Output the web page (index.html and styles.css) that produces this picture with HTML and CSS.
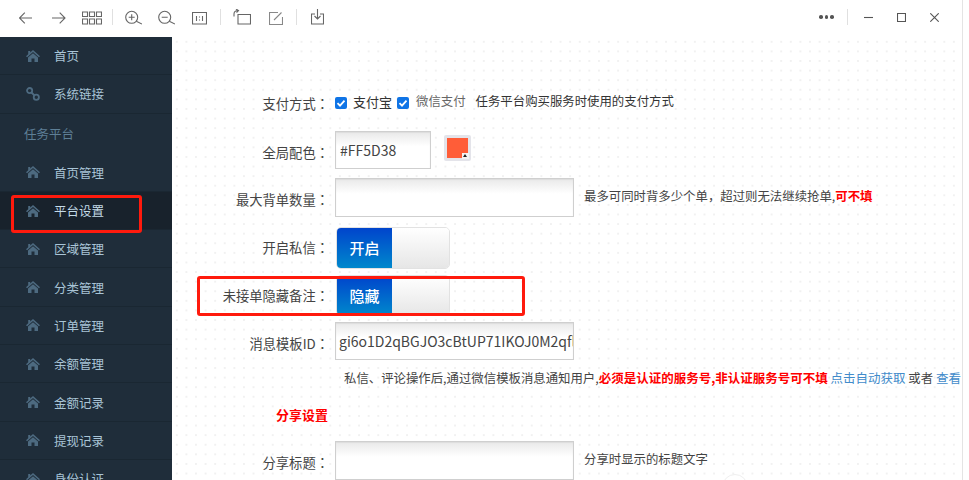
FILE: index.html
```html
<!DOCTYPE html>
<html lang="zh-CN">
<head>
    <meta charset="UTF-8">
    <title>平台设置</title>
    <link rel="stylesheet" href="styles.css">
</head>
<body>
    <svg class="icon-defs" width="0" height="0">
        <symbol id="home" viewBox="0 0 14 12">
            <path d="M7 0 L14 6.200 L12.900 7.200 L7 2 L1.100 7.200 L0 6.200 L2.200 4.300 V1 H4.200 V2.500 Z M7 3.200 L12 7.500 V12 H8.500 V8.500 H5.500 V12 H2 V7.500 Z"/>
        </symbol>
    </svg>

    <!-- Viewer toolbar -->
    <div class="toolbar">
        <div class="tools">
            <svg class="tool t-back" viewBox="0 0 13 16"><path d="M13 9H.5M5.800 3.700L.5 9l5.300 5.300"/></svg>
            <svg class="tool t-forward" viewBox="0 0 14 16"><path d="M0 9h13M7.700 3.700L13 9l-5.300 5.300"/></svg>
            <svg class="tool t-grid" viewBox="0 0 20 16"><path d="M.5 3h5v4.500h-5zM7.500 3h5v4.500h-5zM14.500 3h5v4.500h-5zM.5 10h5v5h-5zM7.500 10h5v5h-5zM14.500 10h5v5h-5z"/></svg>
            <span class="sep"></span>
            <svg class="tool t-zoom" viewBox="0 0 17 16"><circle cx="6.700" cy="8.300" r="6"/><path d="M11.300 12.300L17 15M3.700 8.300h6M6.700 5.300v6"/></svg>
            <svg class="tool t-zoom t-out" viewBox="0 0 17 16"><circle cx="6.700" cy="8.300" r="6"/><path d="M11.300 12.300L17 15M3.700 8.300h6"/></svg>
            <svg class="tool t-actual" viewBox="0 0 15 16"><path d="M.5 3.500h14v11.500H.5zM4.500 7v5M10.500 7v5M7.500 7.500v1M7.500 10.500v1"/></svg>
            <span class="sep"></span>
            <svg class="tool t-rotate" viewBox="0 0 18 16"><path d="M5 5.500h12.500v9.500H5zM1 7.500V5Q1 2 4.500 1.500M3 0l2.500 1.500L3.500 3.500"/></svg>
            <svg class="tool t-edit" viewBox="0 0 14 16"><path d="M9 3.500H.5v12h13V8M5 11l7.500-7.500"/></svg>
            <span class="sep"></span>
            <svg class="tool t-save" viewBox="0 0 13 16"><path d="M4 5H.5v10h12V5H9M6.500 0v10M3.500 7l3 3 3-3"/></svg>
        </div>
        <div class="win-btns">
            <span class="dots"><i></i><i></i><i></i></span>
            <span class="sep"></span>
            <svg class="win" viewBox="0 0 9 9"><path d="M0 4.500h9"/></svg>
            <svg class="win" viewBox="0 0 9 9"><path d="M.5.5h8v8h-8z"/></svg>
            <svg class="win" viewBox="0 0 9 9"><path d="M.3.300l8.400 8.400M8.700.300L.3 8.700"/></svg>
        </div>
    </div>

    <div class="layout">
        <!-- Sidebar -->
        <div class="sidebar">
            <a class="nav-item"><svg class="nav-icon"><use href="#home"/></svg>首页</a>
            <a class="nav-item">
                <svg class="nav-icon nav-link-icon" viewBox="0 0 14 14"><circle cx="3.600" cy="3.600" r="2.600"/><circle cx="10.300" cy="10.300" r="2.600"/><path d="M5.500 5.500l3 3"/></svg>系统链接
            </a>
            <div class="nav-title">任务平台</div>
            <a class="nav-item"><svg class="nav-icon"><use href="#home"/></svg>首页管理</a>
            <a class="nav-item active"><svg class="nav-icon"><use href="#home"/></svg>平台设置</a>
            <a class="nav-item"><svg class="nav-icon"><use href="#home"/></svg>区域管理</a>
            <a class="nav-item"><svg class="nav-icon"><use href="#home"/></svg>分类管理</a>
            <a class="nav-item"><svg class="nav-icon"><use href="#home"/></svg>订单管理</a>
            <a class="nav-item"><svg class="nav-icon"><use href="#home"/></svg>余额管理</a>
            <a class="nav-item"><svg class="nav-icon"><use href="#home"/></svg>金额记录</a>
            <a class="nav-item"><svg class="nav-icon"><use href="#home"/></svg>提现记录</a>
            <a class="nav-item"><svg class="nav-icon"><use href="#home"/></svg>身份认证</a>
        </div>

        <!-- Settings form -->
        <div class="content">
            <div class="row row-pay">
                <label class="row-label">支付方式<span lang="zh-TW">：</span></label>
                <div class="row-body checks">
                    <span class="check"><svg viewBox="0 0 12 12"><path d="M2.500 6.200l2.500 2.500 4.500-5"/></svg></span>
                    <span class="check-alipay">支付宝</span>
                    <span class="check check-second"><svg viewBox="0 0 12 12"><path d="M2.500 6.200l2.500 2.500 4.500-5"/></svg></span>
                    <span class="check-wechat">微信支付</span>
                    <span class="hint-pay">任务平台购买服务时使用的支付方式</span>
                </div>
            </div>
            <div class="row row-color">
                <label class="row-label">全局配色<span lang="zh-TW">：</span></label>
                <div class="row-body">
                    <div class="input input-color">#FF5D38</div>
                    <div class="swatch"><span class="swatch-fill"></span><span class="swatch-arrow"></span></div>
                </div>
            </div>
            <div class="row row-max">
                <label class="row-label">最大背单数量<span lang="zh-TW">：</span></label>
                <div class="row-body">
                    <div class="input input-wide"></div>
                    <span class="hint">最多可同时背多少个单，超过则无法继续抢单,<b class="red">可不填</b></span>
                </div>
            </div>
            <div class="row row-switch">
                <label class="row-label label-flat">开启私信<span lang="zh-TW">：</span></label>
                <div class="row-body">
                    <div class="switch"><span class="switch-on">开启</span><span class="switch-off"></span></div>
                </div>
            </div>
            <div class="row row-switch2">
                <label class="row-label label-flat">未接单隐藏备注<span lang="zh-TW">：</span></label>
                <div class="row-body">
                    <div class="switch"><span class="switch-on">隐藏</span><span class="switch-off"></span></div>
                </div>
            </div>
            <div class="row row-tpl">
                <label class="row-label">消息模板ID<span lang="zh-TW">：</span></label>
                <div class="row-body">
                    <div class="input input-wide input-text">gi6o1D2qBGJO3cBtUP71IKOJ0M2qfl</div>
                </div>
            </div>
            <div class="help-line">私信、评论操作后,通过微信模板消息通知用户,<b class="red">必须是认证的服务号,非认证服务号可不填</b> <a class="link">点击自动获取</a> 或者 <a class="link">查看</a></div>
            <div class="section-title">分享设置</div>
            <div class="row row-share">
                <label class="row-label">分享标题<span lang="zh-TW">：</span></label>
                <div class="row-body">
                    <div class="input input-wide"></div>
                    <span class="hint">分享时显示的标题文字</span>
                </div>
            </div>
        </div>
    </div>

    <!-- Red annotation boxes -->
    <div class="mark mark-nav"></div>
    <div class="mark mark-row"></div>
    <div class="float-ring"></div>
    <div class="page-edge"></div>
</body>
</html>
```

FILE: styles.css
```css
* {
    box-sizing: border-box;
}

body {
    margin: 0;
    height: 480px;
    overflow: hidden;
    position: relative;
    background-color: #ffffff;
    font-family: "Noto Sans CJK SC", "Liberation Sans", sans-serif;
    font-size: 12.400px;
    color: #333333;
}

.icon-defs {
    position: absolute;
}

/* Top toolbar */
.toolbar {
    height: 37px;
    display: flex;
    align-items: center;
    justify-content: space-between;
    background-color: #ffffff;
    padding: 0 30px 3px 19px;
}

.tools, .win-btns {
    display: flex;
    align-items: center;
}

.tool {
    height: 16px;
    fill: none;
    stroke: #666666;
    stroke-width: 1.100;
}

.t-back { width: 13px; }
.t-forward { width: 14px; margin-left: 20px; }
.t-grid { width: 20px; margin-left: 16px; }
.t-zoom { width: 17px; }
.t-out { margin-left: 16px; }
.t-actual { width: 15px; margin-left: 17px; }
.t-rotate { width: 18px; }
.t-edit { width: 14px; margin-left: 18px; stroke: #888888; }
.t-save { width: 13px; margin-left: 2px; }

.sep {
    width: 1px;
    height: 16px;
    background-color: #e0e0e0;
    margin: 0 12px 0 10px;
}

.t-actual + .sep { margin-left: 13px; }
.t-edit + .sep { margin-left: 13px; }

.dots {
    display: flex;
    gap: 2px;
}

.dots i {
    width: 3.600px;
    height: 3.600px;
    border-radius: 50%;
    background-color: #555555;
}

.win-btns .sep {
    margin: 0 16px 0 13px;
}

.win {
    width: 9px;
    height: 9px;
    margin-left: 24px;
    fill: none;
    stroke: #555555;
    stroke-width: 1.100;
}

.sep + .win {
    margin-left: 0;
}

/* Page layout */
.layout {
    display: flex;
    height: 443px;
}

.sidebar {
    width: 172px;
    flex-shrink: 0;
    background-color: #1f2d3a;
    overflow: hidden;
}

.nav-item {
    display: flex;
    align-items: center;
    height: 38.300px;
    padding-left: 26px;
    color: #a9c4d6;
    font-size: 12.500px;
    border-bottom: 1px solid #1a2732;
}

.nav-item.active {
    background-color: #18222c;
    color: #c4dbe8;
}

.nav-icon {
    width: 14px;
    height: 12px;
    margin-right: 14px;
    fill: #4d6a80;
}

.nav-link-icon {
    height: 14px;
    fill: none;
    stroke: #4d6a80;
    stroke-width: 1.800;
}

.nav-title {
    height: 40px;
    line-height: 40px;
    padding-left: 24px;
    color: #5e7f96;
    font-size: 12.500px;
}

/* Form area */
.content {
    flex: 1;
    min-width: 0;
    overflow: hidden;
    padding-top: 50px;
    background-color: #ffffff;
    background-image: radial-gradient(circle, #dcdcdc 0.5px, transparent 0.8px);
    background-size: 9.600px 9.600px;
}

.row {
    display: flex;
    align-items: center;
}

.row-label {
    width: 157px;
    padding-top: 4px;
    text-align: right;
    color: #444444;
    font-size: 13.300px;
    flex-shrink: 0;
}

.row-label span {
    font-family: "Noto Sans CJK TC", sans-serif;
}

.label-flat {
    padding-top: 0;
}

.row-body {
    display: flex;
    align-items: center;
    margin-left: 6px;
}

.row-pay {
    height: 28px;
}

.check {
    width: 12px;
    height: 12px;
    margin-top: 3px;
    margin-right: 6px;
    border-radius: 2px;
    background-color: #0f74e6;
    display: flex;
}

.check svg {
    fill: none;
    stroke: #ffffff;
    stroke-width: 1.800;
}

.check-alipay {
    font-size: 13px;
}

.check-wechat {
    color: #666666;
}

.check-second {
    margin-left: 5px;
    margin-right: 7px;
}

.hint-pay {
    margin: 0 0 1px 10px;
}

.row-color {
    height: 38px;
    margin-top: 16px;
}

.row-max {
    height: 39px;
    margin-top: 9px;
}

.row-switch {
    height: 43px;
    margin-top: 9px;
}

.row-switch2 {
    height: 41px;
    margin-top: 6px;
}

.row-tpl {
    height: 38px;
    margin-top: 6px;
}

.row-share {
    height: 39px;
    margin-top: 17px;
}

.row-share .input,
.row-max .input {
    height: 39px;
}

.input {
    height: 38px;
    border: 1px solid #cfcfcf;
    background: linear-gradient(#e9e9e9, #ffffff 40%);
    box-shadow: inset 0 1px 1px #dddddd;
    overflow: hidden;
    white-space: nowrap;
    line-height: 36px;
}

.input-color {
    width: 96px;
    padding-left: 4px;
    font-size: 14px;
    color: #444444;
}

.input-wide {
    width: 239px;
}

.input-text {
    padding-left: 3px;
    font-size: 14px;
    color: #444444;
}

.swatch {
    position: relative;
    width: 27px;
    height: 26px;
    margin: -4px 0 0 13px;
    padding: 3px;
    background-color: #e4e4ea;
    border-radius: 2px;
}

.swatch-fill {
    display: block;
    width: 21px;
    height: 20px;
    background-color: #ff5d38;
}

.swatch-arrow {
    position: absolute;
    right: 2px;
    bottom: 2px;
    width: 7px;
    height: 6px;
    background-color: #f4f4f4;
}

.swatch-arrow::after {
    content: "";
    position: absolute;
    left: 1px;
    top: 1px;
    border-left: 2.500px solid transparent;
    border-right: 2.500px solid transparent;
    border-bottom: 3px solid #222222;
}

.hint {
    margin: 0 0 4px 10px;
    color: #444444;
}

.red {
    color: #ff0000;
    font-weight: bold;
}

.switch {
    display: flex;
    width: 114px;
    height: 42px;
    margin-left: 1px;
    border-radius: 5px;
    overflow: hidden;
    border: 1px solid #e2e2e2;
}

.row-switch2 .switch {
    height: 41px;
}

.switch-on {
    width: 55px;
    display: flex;
    align-items: center;
    justify-content: center;
    color: #ffffff;
    font-size: 15px;
    font-weight: 500;
    background: linear-gradient(#0044cc, #0088cc);
}

.switch-off {
    flex: 1;
    background: linear-gradient(#ffffff, #e6e6e6);
}

.help-line {
    margin: 9px 0 0 172px;
    height: 18px;
    line-height: 18px;
    white-space: nowrap;
    color: #444444;
}

.help-line .red,
.help-line .link {
    font-size: 12.500px;
}

.link {
    color: #428bca;
}

.section-title {
    margin: 19px 0 0 104px;
    height: 18px;
    line-height: 18px;
    font-size: 13px;
    color: #ff0000;
    font-weight: bold;
}

/* Annotations */
.mark {
    position: absolute;
    border: 3px solid #ff1a0d;
    border-radius: 3px;
}

.mark-nav {
    left: 11px;
    top: 195px;
    width: 131px;
    height: 38px;
}

.mark-row {
    left: 197px;
    top: 276px;
    width: 328px;
    height: 40px;
}

.float-ring {
    position: absolute;
    left: 722px;
    top: 474px;
    width: 26px;
    height: 26px;
    border: 1px solid #efefef;
    border-radius: 50%;
}

.page-edge {
    position: absolute;
    top: 0;
    right: 0;
    width: 7px;
    height: 100%;
    background-color: #ffffff;
    border-left: 1px solid #e4e4e4;
}
```
